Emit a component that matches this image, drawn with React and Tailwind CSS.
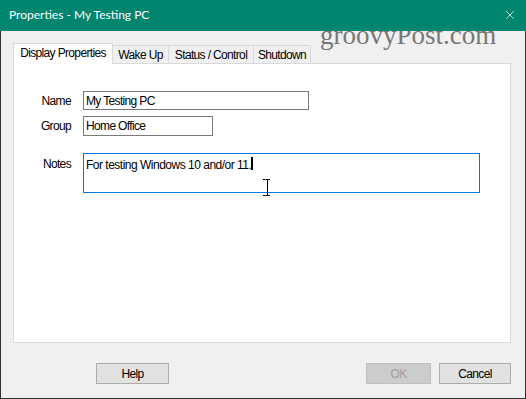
import { X } from "lucide-react";

const ui = "font-['Liberation_Sans',Arial,sans-serif] text-[12px] tracking-[-0.65px] text-black";

function Tab({ label, active, className }) {
  if (active) {
    return (
      <div className={`h-[21px] border-x border-t border-[#d9d9d9] bg-white flex items-center justify-center pb-[2px] ${className}`}>
        {label}
      </div>
    );
  }
  return (
    <div className={`h-[19px] border-t border-r border-b border-[#d9d9d9] bg-[#f0f0f0] flex items-center justify-center ${className}`}>
      {label}
    </div>
  );
}

function Field({ label, children, top }) {
  return (
    <div className={`flex ${top ? "items-start" : "items-center"}`}>
      <div className={`w-[58px] text-right pr-px ${top ? "pt-[2px]" : ""}`}>{label}</div>
      <div className="ml-[11px]">{children}</div>
    </div>
  );
}

function Button({ label, disabled, width }) {
  return (
    <div
      className={`h-[21px] ${width} flex items-center justify-center border ${
        disabled ? "border-[#bfbfbf] bg-[#cccccc] text-[#a0a0a0]" : "border-[#adadad] bg-[#e1e1e1]"
      }`}
    >
      {label}
    </div>
  );
}

export default function App() {
  return (
    <div className={`w-[526px] h-[399px] relative flex flex-col overflow-hidden bg-[#f0f0f0] ${ui}`}>
      {/* watermark sits under the title bar */}
      <div className="absolute left-[320px] top-[22px] font-['Liberation_Serif',serif] text-[27px] tracking-normal leading-none text-[#777777]">
        groovyPost.com
      </div>

      <div className="relative z-10 h-[31px] shrink-0 bg-[#00856f] flex items-center justify-between pl-[9px] pr-[9px] text-white">
        <span className="font-['Segoe_UI',Lato,sans-serif] text-[12px] tracking-normal pb-px">Properties - My Testing PC</span>
        <X size={14} strokeWidth={1.2} className="text-white mt-[-1px]" />
      </div>

      <div className="relative flex-1 border-x border-b border-[#303030] pl-[12px] pt-[12px]">
        <div className="relative z-10 -mb-px flex items-end">
          <Tab label="Display Properties" active className="w-[100px]" />
          <Tab label="Wake Up" className="w-[56px]" />
          <Tab label="Status / Control" className="w-[85px]" />
          <Tab label="Shutdown" className="w-[57px]" />
        </div>

        <div className="w-[498px] h-[280px] border border-[#d9d9d9] bg-white pt-[27px] flex flex-col gap-[6px]">
          <Field label="Name">
            <div className="w-[226px] h-[19px] border border-[#7a7a7a] pl-[2px] flex items-center">My Testing PC</div>
          </Field>
          <Field label="Group">
            <div className="w-[130px] h-[20px] border border-[#7a7a7a] pl-[2px] flex items-center">Home Office</div>
          </Field>
          <div className="mt-[11px]">
            <Field label="Notes" top>
              <div className="relative w-[397px] h-[40px] border border-[#0078d7] pl-[2px] pt-[2px] flex items-start">
                <span className="tracking-[-0.5px]">For testing Windows 10 and/or 11.</span>
                <span className="inline-block w-[2px] h-[13px] bg-black mt-[1px]" />
                <svg
                  className="absolute left-[178px] top-[25px]"
                  width="9"
                  height="17"
                  viewBox="0 0 9 17"
                  fill="none"
                  stroke="black"
                  strokeWidth="1"
                >
                  <path d="M1 0.5h2.5M5.5 0.5H8M3.5 0.5h2v16h-2M5.5 16.5H8M1 16.5h2.5" />
                </svg>
              </div>
            </Field>
          </div>
        </div>

        <div className="mt-[20px] flex items-center pr-[14px]">
          <div className="ml-[83px]">
            <Button label="Help" width="w-[73px]" />
          </div>
          <div className="ml-auto flex gap-[8px]">
            <Button label="OK" disabled width="w-[65px]" />
            <Button label="Cancel" width="w-[72px]" />
          </div>
        </div>
      </div>
    </div>
  );
}
